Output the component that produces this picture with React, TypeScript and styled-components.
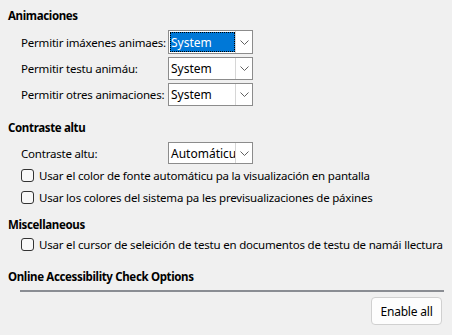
import React from "react";
import styled, { createGlobalStyle } from "styled-components";

const Global = createGlobalStyle`
  html, body { margin: 0; padding: 0; background: #f0f0f0; }
  body { font-family: "Noto Sans", "Segoe UI", sans-serif; font-size: 11.5px; color: #000; }
  * { box-sizing: border-box; }
`;

const Page = styled.div`
  width: 452px;
  height: 335px;
  padding: 8px 8px 0 8px;
  display: flex;
  flex-direction: column;
  overflow: hidden;
`;

const Heading = styled.div<{ $mt?: number }>`
  font-weight: 700;
  height: 16px;
  line-height: 16px;
  margin-top: ${(p) => p.$mt ?? 0}px;
  letter-spacing: -0.35px;
`;

const Grid = styled.div<{ $mt?: number }>`
  display: grid;
  grid-template-columns: 147px 85px;
  row-gap: 3px;
  margin-top: ${(p) => p.$mt ?? 0}px;
  padding-left: 13px;
  align-items: center;
`;

const Label = styled.div`
  white-space: nowrap;
  letter-spacing: -0.2px;
`;

const Combo = styled.div<{ $h: number }>`
  height: ${(p) => p.$h}px;
  background: #fff;
  border: 1px solid #8c8c8c;
  display: flex;
  align-items: stretch;
  padding: 1px;
`;

const ComboText = styled.div<{ $focus?: boolean }>`
  flex: 1;
  display: flex;
  align-items: center;
  padding-left: 1px;
  font-size: 12px;
  background: ${(p) => (p.$focus ? "#0078d7" : "transparent")};
  color: ${(p) => (p.$focus ? "#fff" : "#000")};
  outline: ${(p) => (p.$focus ? "1px dotted #000" : "none")};
  outline-offset: -1px;
  white-space: nowrap;
  overflow: hidden;
`;

const ComboButton = styled.div`
  width: 17px;
  display: flex;
  align-items: center;
  justify-content: center;
  border-left: 1px solid #d6d6d6;
  margin: -1px -1px -1px 0;
`;

const Chevron = () => (
  <svg width="9" height="5" viewBox="0 0 9 5">
    <path d="M0.5 0.5 L4.5 4.5 L8.5 0.5" fill="none" stroke="#606060" strokeWidth="1" />
  </svg>
);

const CheckRow = styled.div<{ $mt?: number }>`
  display: flex;
  align-items: center;
  gap: 5px;
  height: 20px;
  padding-left: 13px;
  margin-top: ${(p) => p.$mt ?? 0}px;
  white-space: nowrap;
  letter-spacing: -0.2px;
`;

const Box = styled.span`
  width: 13px;
  height: 13px;
  border: 1px solid #333;
  border-radius: 3px;
  background: #f8f8f8;
  flex: none;
`;

const Separator = styled.div`
  height: 2px;
  background: #8a8d93;
  margin: 5px 0 0 12px;
`;

const Footer = styled.div`
  display: flex;
  justify-content: flex-end;
  margin-top: 5px;
  padding-right: 2px;
`;

const Button = styled.button`
  font-family: inherit;
  font-size: 12px;
  width: 71px;
  height: 28px;
  background: #fdfdfd;
  border: 1px solid #d0d0d0;
  border-radius: 4px;
  color: #000;
  padding: 0;
  letter-spacing: -0.2px;
`;

const ComboBox = ({ value, h, focus }: { value: string; h: number; focus?: boolean }) => (
  <Combo $h={h}>
    <ComboText $focus={focus}>{value}</ComboText>
    <ComboButton>
      <Chevron />
    </ComboButton>
  </Combo>
);

export default function App() {
  return (
    <>
      <Global />
      <Page>
        <Heading>Animaciones</Heading>
        <Grid $mt={6}>
          <Label>Permitir imáxenes animaes:</Label>
          <ComboBox value="System" h={24} focus />
          <Label>Permitir testu animáu:</Label>
          <ComboBox value="System" h={23} />
          <Label>Permitir otres animaciones:</Label>
          <ComboBox value="System" h={23} />
        </Grid>
        <Heading $mt={14}>Contraste altu</Heading>
        <Grid $mt={6}>
          <Label>Contraste altu:</Label>
          <ComboBox value="Automáticu" h={22} />
        </Grid>
        <CheckRow $mt={1}>
          <Box />
          Usar el color de fonte automáticu pa la visualización en pantalla
        </CheckRow>
        <CheckRow $mt={2}>
          <Box />
          Usar los colores del sistema pa les previsualizaciones de páxines
        </CheckRow>
        <Heading $mt={10}>Miscellaneous</Heading>
        <CheckRow $mt={1}>
          <Box />
          Usar el cursor de seleición de testu en documentos de testu de namái llectura
        </CheckRow>
        <Heading $mt={15}>Online Accessibility Check Options</Heading>
        <Separator />
        <Footer>
          <Button>Enable all</Button>
        </Footer>
      </Page>
    </>
  );
}
